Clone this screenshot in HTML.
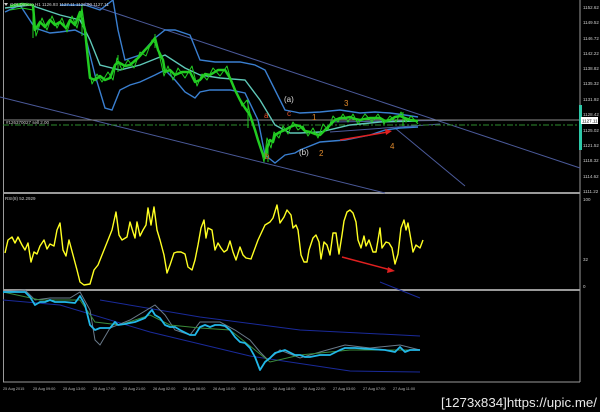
<!DOCTYPE html>
<html><head><meta charset="utf-8"><style>
html,body{margin:0;padding:0;background:#000;width:600px;height:412px;overflow:hidden}
svg{display:block}
text{font-family:"Liberation Sans",sans-serif}
</style></head><body>
<svg width="600" height="412" viewBox="0 0 600 412" xmlns="http://www.w3.org/2000/svg">
<rect width="600" height="412" fill="#000"/>
<g stroke="#9a9a9a" fill="none">
<line x1="3" y1="193" x2="580" y2="193" stroke-width="2"/>
<line x1="3" y1="290" x2="580" y2="290" stroke-width="2"/>
<line x1="580" y1="0" x2="580" y2="382" stroke-width="1"/>
<line x1="3" y1="382" x2="580" y2="382" stroke-width="1"/>
<line x1="3.5" y1="0" x2="3.5" y2="382" stroke-width="1"/>
</g>
<g stroke="#4b5a9a" stroke-width="1" fill="none">
<line x1="85" y1="3" x2="580" y2="168"/>
<line x1="0" y1="97" x2="385" y2="193"/>
<line x1="395" y1="128" x2="465" y2="186"/>
<line x1="330" y1="122" x2="470" y2="120"/>
<line x1="330" y1="132" x2="440" y2="124"/>
</g>
<line x1="3" y1="120" x2="580" y2="120" stroke="#8a8a8a" stroke-width="1"/>
<line x1="3" y1="125" x2="580" y2="125" stroke="#2e8b2e" stroke-width="1" stroke-dasharray="6,2,2,2"/>
<text x="6" y="124" font-size="4.5" fill="#ccc">#126370027 sell 2.00</text>
<g fill="none" stroke-width="1.4">
<polyline stroke="#3a7fd0" points="60,5 85,5 100,10 113,0 118,30 125,60 140,55 155,38 165,30 175,30 190,35 200,60 215,62 240,62 255,65 265,70 275,90 285,110 295,112 300,113 320,112 340,110 360,113 375,112 390,113 405,115 418,117"/>
<polyline stroke="#3a7fd0" points="5,12 20,5 35,28 50,33 60,32 75,30 85,35 95,75 105,108 112,110 120,90 130,85 140,82 155,75 165,70 175,80 185,92 195,98 200,92 210,90 230,90 245,93 258,120 265,155 275,163 285,155 295,153 300,150 320,142 345,140 370,135 385,130 400,128 418,127"/>
<polyline stroke="#5fc8b8" points="5,8 30,5 60,15 80,20 90,40 100,65 120,70 140,65 165,55 185,68 200,75 220,78 245,80 260,100 275,125 290,133 300,133 320,132 350,125 380,122 418,121"/>
</g>
<g fill="none" stroke="#22cc22" stroke-linejoin="round">
<polyline stroke-width="2.5" points="10,6 22,4 33,5 35,30 40,22 45,27 50,20 55,25 60,22 66,28 70,20 75,25 80,12 85,30 88,60 90,78 95,80 100,76 105,80 110,78 115,65 118,62 125,66 130,65 138,58 145,50 150,45 155,38 158,50 163,60 165,72 170,70 175,75 182,72 190,72 195,82 200,80 205,74 210,75 218,70 225,70 230,78 235,90 240,100 245,108 250,115 255,130 258,140 262,152 265,158 268,145 270,140 273,142 275,135 280,132 285,130 290,127 295,125 300,126 305,131 310,132 315,134 320,135 325,130 330,125 335,120 340,118 345,118 350,117 355,119 360,120 370,118 380,118 385,121 390,120 395,117 400,116 405,118 410,120 418,121"/>
<polyline stroke-width="1" points="10,10 22,8 33,10 36,36 42,18 47,30 52,16 57,28 62,18 67,32 72,16 77,28 82,8 86,36 89,68 92,84 97,74 102,82 108,72 113,80 117,58 122,70 128,60 134,68 140,52 146,56 152,40 156,44 160,58 164,76 168,66 173,80 178,68 185,78 192,66 197,86 202,74 207,80 213,68 220,76 227,66 232,84 237,94 242,106 247,100 252,122 256,134 260,146 264,162 267,138 271,148 274,132 279,138 283,126 288,134 293,122 298,130 303,126 308,136 313,128 318,138 323,124 328,130 333,116 338,122 343,114 348,122 353,114 358,124 365,114 372,122 378,114 384,124 390,116 396,122 401,112 406,122 411,116 418,124"/>
</g>
<g stroke="#22cc22" stroke-width="1">
<line x1="33" y1="10" x2="33" y2="38"/><line x1="82" y1="5" x2="82" y2="36"/><line x1="118" y1="55" x2="118" y2="72"/><line x1="155" y1="34" x2="155" y2="48"/><line x1="248" y1="100" x2="248" y2="128"/><line x1="268" y1="140" x2="268" y2="162"/><line x1="403" y1="112" x2="403" y2="126"/>
</g>
<line x1="340" y1="140" x2="388" y2="132" stroke="#e02020" stroke-width="1.5"/>
<polygon points="392,131 385,129 386,135" fill="#e02020"/>
<g font-size="8">
<text x="284" y="102" fill="#ddd">(a)</text>
<text x="299" y="155" fill="#ddd">(b)</text>
<text x="264" y="118" fill="#e0502c">a</text>
<text x="265" y="159" fill="#e0502c">b</text>
<text x="287" y="116" fill="#e0502c">c</text>
<text x="312" y="120" fill="#e08a2c">1</text>
<text x="319" y="156" fill="#e08a2c">2</text>
<text x="344" y="106" fill="#e08a2c">3</text>
<text x="390" y="149" fill="#e08a2c">4</text>
</g>
<text x="10" y="6" font-size="4.5" fill="#ccc">GOLDmicro,H1  1126.93 1127.11 1126.90 1127.11</text>
<polygon points="4,3 8,3 6,6" fill="#ccc"/>
<g font-size="4.5" fill="#ccc">
<text x="583" y="9">1152.62</text><text x="583" y="24">1149.52</text><text x="583" y="40">1146.72</text><text x="583" y="55">1142.22</text><text x="583" y="70">1138.82</text><text x="583" y="85">1135.32</text><text x="583" y="101">1131.92</text><text x="583" y="116">1128.42</text><text x="583" y="132">1125.02</text><text x="583" y="147">1121.52</text><text x="583" y="162">1118.32</text><text x="583" y="178">1114.62</text><text x="583" y="193">1111.22</text>
<text x="583" y="201">100</text><text x="583" y="261">32</text><text x="583" y="288">0</text>
</g>
<rect x="579" y="105" width="3" height="45" fill="#2ec8a8"/>
<rect x="581" y="117" width="17" height="7" fill="#fff"/>
<text x="582" y="122.5" font-size="4.5" fill="#000">1127.11</text>
<text x="5" y="200" font-size="4.5" fill="#ccc">RSI(8) 52.2929</text>
<polyline fill="none" stroke="#ffff22" stroke-width="1.4" stroke-linejoin="round" points="5,253 8,240 12,237 15,243 18,237 22,245 25,250 28,243 31,262 34,252 37,254 40,246 44,240 47,249 50,244 54,246 57,230 60,223 63,250 66,256 69,240 73,255 77,270 80,282 84,285 90,284 94,270 98,265 102,255 108,240 112,230 116,212 119,235 122,240 127,237 130,222 133,232 135,238 137,222 140,236 143,230 146,225 148,208 151,225 154,207 157,230 160,240 164,255 167,273 170,265 174,253 177,252 181,252 185,254 188,267 192,270 195,260 198,245 201,228 204,220 206,238 208,228 212,230 215,250 218,243 221,248 224,252 227,250 230,241 233,252 236,260 240,247 243,255 246,258 251,259 258,240 265,225 270,222 273,218 277,205 280,223 284,217 287,210 291,215 293,228 296,225 298,230 301,255 304,262 307,262 309,250 313,238 316,235 319,242 321,259 324,242 327,245 330,255 333,233 336,233 339,254 342,235 344,221 347,212 350,210 353,213 356,222 358,240 361,248 364,236 366,246 369,240 373,252 376,252 380,228 382,248 386,242 389,243 392,248 395,264 398,254 401,228 404,220 406,230 408,223 411,240 413,252 416,245 420,248 423,240"/>
<line x1="342" y1="257" x2="391" y2="270" stroke="#e02020" stroke-width="1.5"/>
<polygon points="395,271 388,267 387,273" fill="#e02020"/>
<g fill="none" stroke-width="1">
<polyline stroke="#1a2a9a" points="100,300 200,317 300,330 420,336"/>
<polyline stroke="#1a2a9a" points="3,300 60,305 150,332 250,356 350,371 420,372"/>
<polyline stroke="#1a2a9a" points="380,282 420,298"/>
<polyline stroke="#6a7a8a" points="3,292 25,290 35,300 50,298 70,298 80,292 90,310 95,340 100,345 110,328 130,320 155,305 165,315 175,330 190,335 200,322 220,322 235,330 250,340 260,352 268,360 280,350 300,358 320,352 345,345 370,348 400,345 420,350"/>
<polyline stroke="#3a8a3a" points="3,292 40,300 80,300 95,322 120,325 150,315 170,325 200,328 230,330 255,350 270,362 300,355 350,350 420,350"/>
</g>
<polyline fill="none" stroke="#22b8e8" stroke-width="1.8" stroke-linejoin="round" points="3,292 20,292 25,292 30,297 35,305 40,302 45,302 50,300 55,302 65,302 75,303 80,296 85,305 90,325 95,330 100,328 110,328 115,322 118,325 125,324 135,322 145,318 150,312 152,310 155,315 160,318 165,325 170,327 175,327 180,330 190,335 195,335 200,327 205,325 210,327 215,325 220,325 225,326 230,330 235,337 240,342 245,343 250,348 255,357 260,370 265,362 270,358 275,353 285,350 295,355 300,355 305,357 310,357 320,355 330,355 340,350 345,348 355,348 370,349 385,350 395,352 400,347 405,352 410,350 420,350"/>
<g font-size="3.8" fill="#bbb">
<text x="3" y="390">25 Aug 2015</text><text x="33" y="390">25 Aug 09:00</text><text x="63" y="390">25 Aug 13:00</text><text x="93" y="390">25 Aug 17:00</text><text x="123" y="390">25 Aug 21:00</text><text x="153" y="390">26 Aug 02:00</text><text x="183" y="390">26 Aug 06:00</text><text x="213" y="390">26 Aug 10:00</text><text x="243" y="390">26 Aug 14:00</text><text x="273" y="390">26 Aug 18:00</text><text x="303" y="390">26 Aug 22:00</text><text x="333" y="390">27 Aug 03:00</text><text x="363" y="390">27 Aug 07:00</text><text x="393" y="390">27 Aug 11:00</text>
</g>
<text x="441" y="407" font-size="12.5" fill="#e8e8e8" textLength="156" lengthAdjust="spacingAndGlyphs">[1273x834]https://upic.me/</text>
</svg>
</body></html>
